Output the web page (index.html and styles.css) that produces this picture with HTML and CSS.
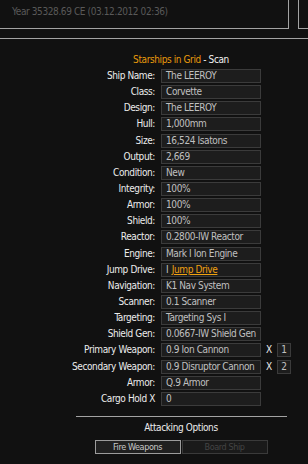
FILE: index.html
```html
<!DOCTYPE html>
<html>
<head>
<meta charset="utf-8">
<link rel="stylesheet" href="styles.css">
</head>
<body>
<div class="header">
  <div class="clock">Year 35328.69 CE (03.12.2012 02:36)</div>
  <div class="side"></div>
</div>
<div class="rule"></div>
<div class="panel">
  <div class="title"><span class="hl">Starships in Grid</span> - Scan</div>
  <div class="grid">
    <div class="lbl">Ship Name:</div><div class="val">The LEEROY</div>
    <div class="lbl">Class:</div><div class="val">Corvette</div>
    <div class="lbl">Design:</div><div class="val">The LEEROY</div>
    <div class="lbl">Hull:</div><div class="val">1,000mm</div>
    <div class="lbl">Size:</div><div class="val">16,524 Isatons</div>
    <div class="lbl">Output:</div><div class="val">2,669</div>
    <div class="lbl">Condition:</div><div class="val">New</div>
    <div class="lbl">Integrity:</div><div class="val">100%</div>
    <div class="lbl">Armor:</div><div class="val">100%</div>
    <div class="lbl">Shield:</div><div class="val">100%</div>
    <div class="lbl">Reactor:</div><div class="val">0.2800-IW Reactor</div>
    <div class="lbl">Engine:</div><div class="val">Mark I Ion Engine</div>
    <div class="lbl">Jump Drive:</div><div class="val">I <a class="link" href="#">Jump Drive</a></div>
    <div class="lbl">Navigation:</div><div class="val">K1 Nav System</div>
    <div class="lbl">Scanner:</div><div class="val">0.1 Scanner</div>
    <div class="lbl">Targeting:</div><div class="val">Targeting Sys I</div>
    <div class="lbl">Shield Gen:</div><div class="val">0.0667-IW Shield Gen</div>
    <div class="lbl">Primary Weapon:</div><div class="val">0.9 Ion Cannon</div><div class="x">X</div><div class="cnt">1</div>
    <div class="lbl">Secondary Weapon:</div><div class="val">0.9 Disruptor Cannon</div><div class="x">X</div><div class="cnt">2</div>
    <div class="lbl">Armor:</div><div class="val">Q.9 Armor</div>
    <div class="lbl">Cargo Hold X</div><div class="val">0</div>
  </div>
  <div class="sep"></div>
  <div class="subtitle">Attacking Options</div>
  <div class="buttons">
    <div class="btn">Fire Weapons</div>
    <div class="btn disabled">Board Ship</div>
  </div>
</div>
</body>
</html>
```
FILE: styles.css
```css
html, body {
  margin: 0;
  padding: 0;
  background: #111111;
}
body {
  font-family: "DejaVu Sans Condensed", "DejaVu Sans", sans-serif;
  font-stretch: condensed;
  font-size: 10px;
  letter-spacing: -0.4px;
  color: #e6e6e6;
  width: 308px;
  height: 464px;
  overflow: hidden;
}
.header {
  display: flex;
  gap: 9px;
  margin-top: -1px;
  margin-left: -1px;
}
.clock {
  box-sizing: border-box;
  width: 290px;
  height: 30px;
  border: 1px solid #a3a3a3;
  padding: 5px 0 0 12px;
  line-height: 14px;
  color: #595959;
}
.side {
  flex: 1;
  height: 30px;
  box-sizing: border-box;
  border: 1px solid #a3a3a3;
  border-right: none;
}
.rule {
  height: 1px;
  background: #a3a3a3;
  margin-top: 9px;
}
.panel {
  margin-left: 54px;
  width: 254px;
}
.title {
  text-align: center;
  line-height: 14px;
  margin-top: 14px;
  margin-bottom: 2px;
  color: #f2f2f2;
}
.hl {
  color: #e89a0c;
}
.grid {
  display: grid;
  grid-template-columns: 107px 100px 16px 14px;
  grid-auto-rows: 14px;
  row-gap: 2.15px;
}
.lbl {
  grid-column: 1;
  text-align: right;
  padding-right: 6px;
  line-height: 14px;
  white-space: nowrap;
  color: #ececec;
}
.val, .cnt {
  box-sizing: border-box;
  border: 1px solid #3b3b3b;
  background: #1d1d1d;
  color: #c0c0c0;
  padding-left: 4px;
  line-height: 12px;
  white-space: nowrap;
  overflow: hidden;
}
.val {
  grid-column: 2;
}
.x {
  grid-column: 3;
  text-align: center;
  line-height: 14px;
  color: #ececec;
}
.cnt {
  grid-column: 4;
  padding-left: 0;
  text-align: center;
}
.link {
  color: #f0a010;
  text-decoration: underline;
  margin-left: 1px;
}
.sep {
  width: 211px;
  height: 1px;
  background: #a3a3a3;
  margin: 10px auto 0;
}
.subtitle {
  text-align: center;
  line-height: 14px;
  margin-top: 4px;
  color: #ececec;
}
.buttons {
  display: flex;
  justify-content: center;
  gap: 1px;
  margin-top: 5px;
}
.btn {
  box-sizing: border-box;
  width: 86px;
  height: 14px;
  border: 1px solid #9c9c9c;
  background: #202020;
  color: #c8c8c8;
  font-size: 9px;
  letter-spacing: -0.4px;
  line-height: 12px;
  text-align: center;
}
.btn.disabled {
  border-color: #3a3a3a;
  background: #1a1a1a;
  color: #444444;
}
```
